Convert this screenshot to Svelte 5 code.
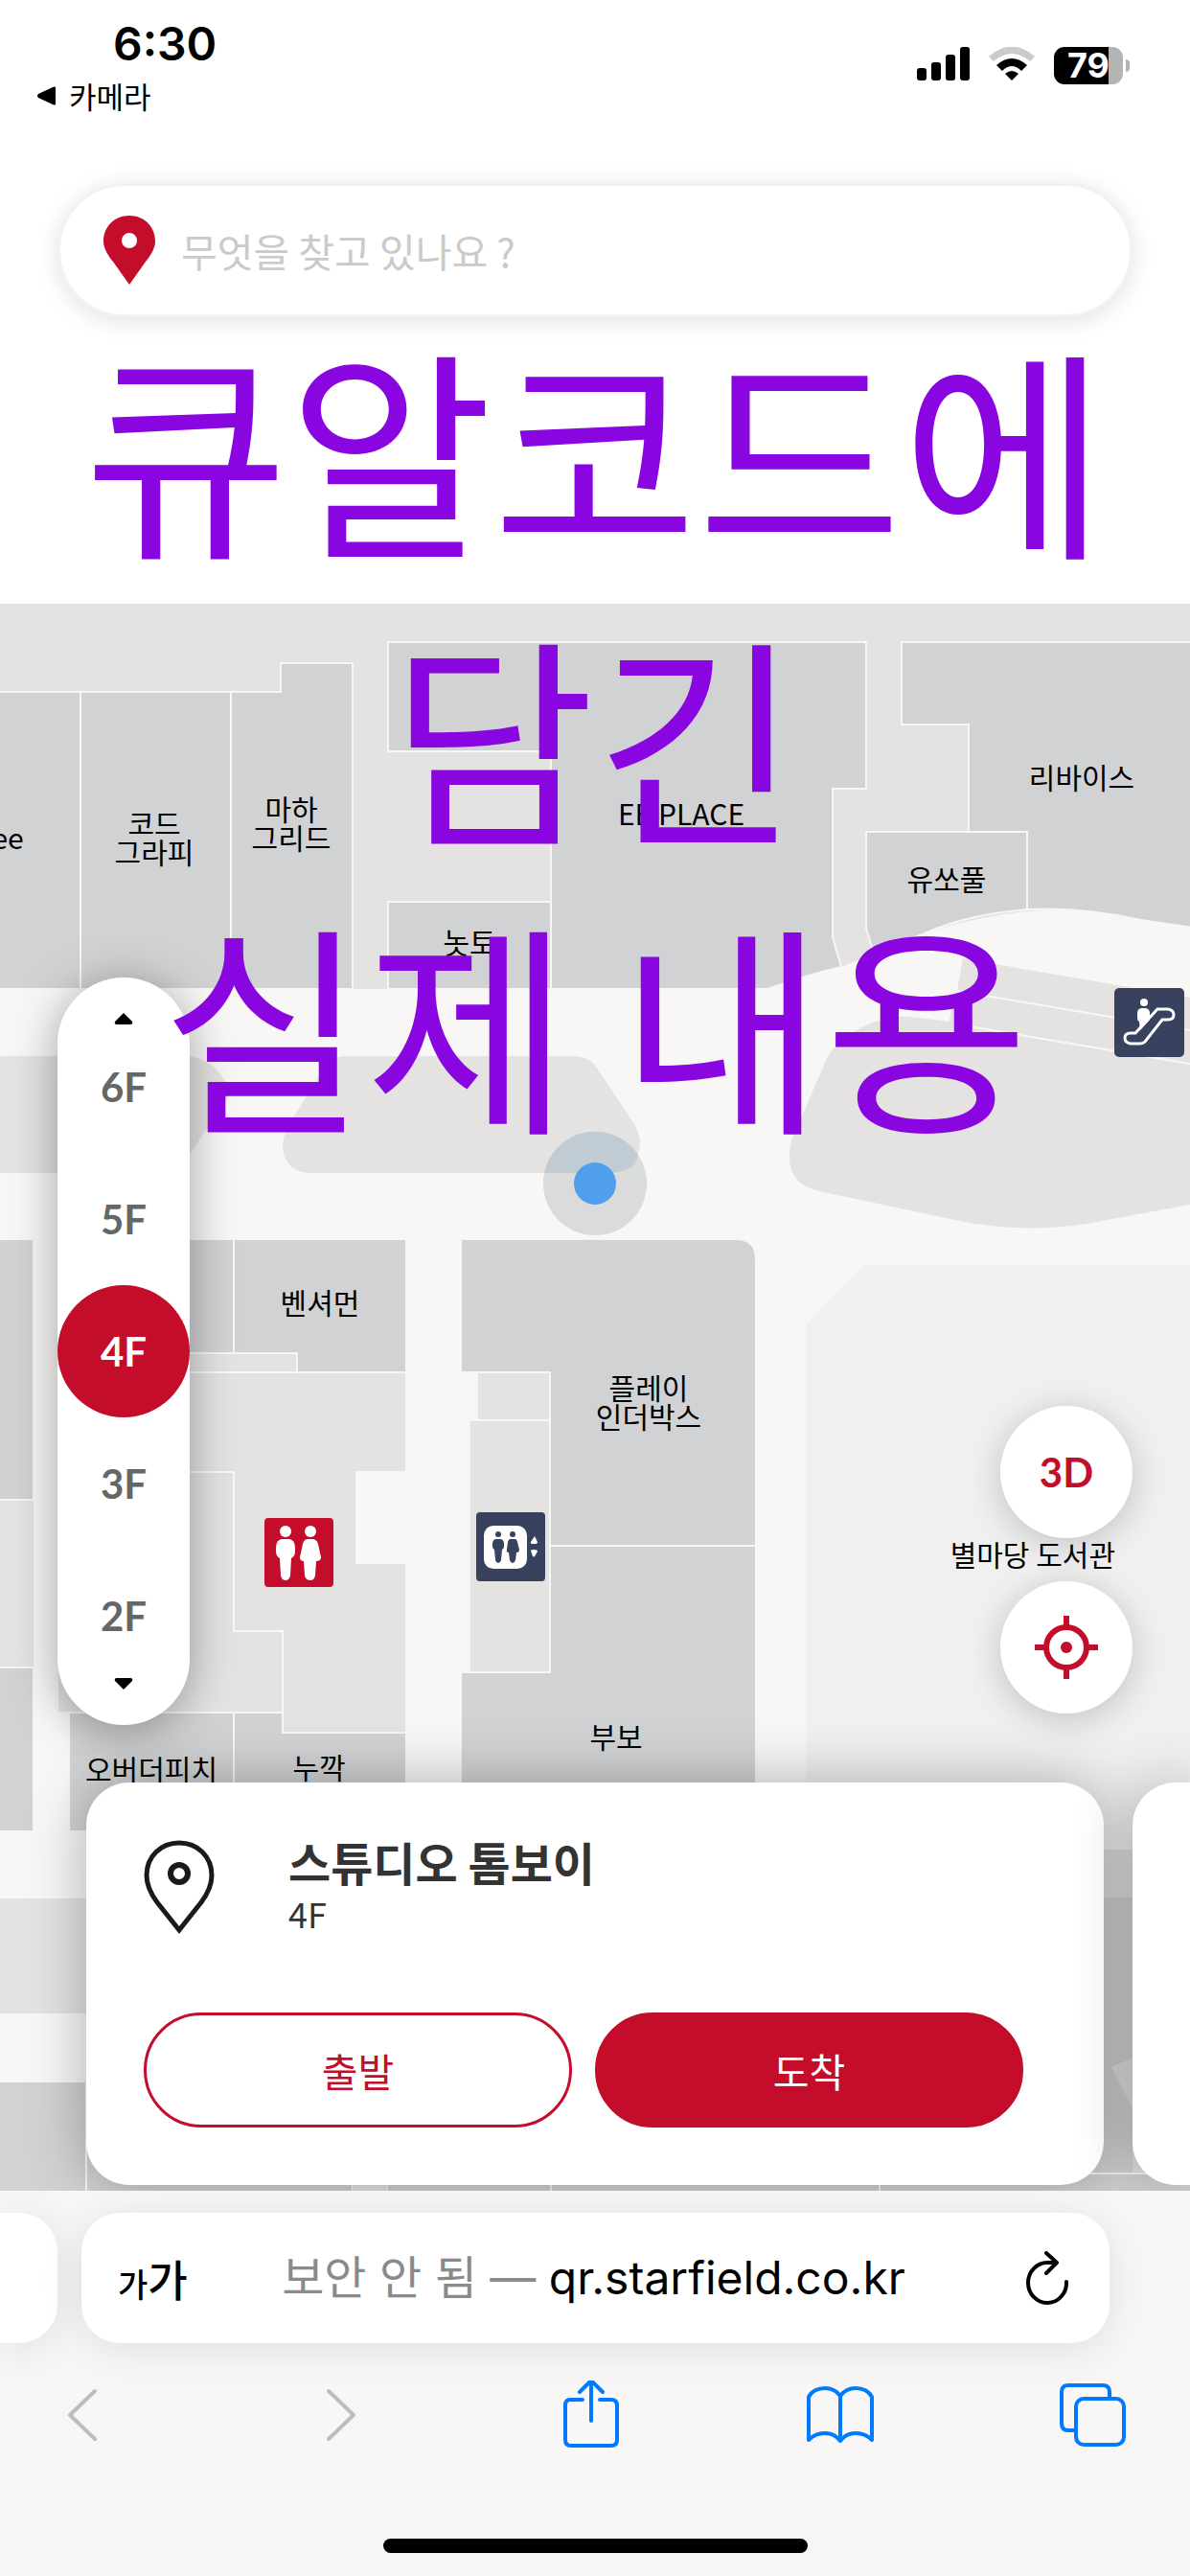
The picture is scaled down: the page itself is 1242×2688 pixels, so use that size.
<script lang="ts">
  let floors = ["6F", "5F", "4F", "3F", "2F"];
  let floor = "4F";
  let query = "";
  let is3d = false;

  const labels = [
    { x: 161, y: 871, lines: ["코드", "그라피"] },
    { x: 304, y: 856, lines: ["마하", "그리드"] },
    { x: 8, y: 886, lines: ["ee"] },
    { x: 711, y: 861, lines: ["EE PLACE"] },
    { x: 1129, y: 823, lines: ["리바이스"] },
    { x: 988, y: 929, lines: ["유쏘풀"] },
    { x: 490, y: 995, lines: ["놋토"] },
    { x: 334, y: 1371, lines: ["벤셔먼"] },
    { x: 677, y: 1460, lines: ["플레이", "인더박스"] },
    { x: 643, y: 1824, lines: ["부보"] },
    { x: 158, y: 1858, lines: ["오버더피치"] },
    { x: 333, y: 1856, lines: ["누깍"] },
  ];

  const shops = [
    "M-4 722H84V1032H-4Z",
    "M84 722H241V1032H84Z",
    "M241 722H293V692H368V1032H241Z",
    "M405 941H575V1032H405Z",
    "M405 670H904V823H869V978L878 1009Q840 1018 801 1032H575V784H405Z",
    "M941 670H1246V968L1191 960Q1130 946 1072 949V868H1011V756H941Z",
    "M904 868H1072V949Q1010 954 965 974L912 994L904 969Z",
    "M-4 1293H35V1565H-4Z",
    "M60 1293H244V1412H60Z",
    "M244 1293H424V1432H310V1412H244Z",
    "M-4 1740H35V1911H-4Z",
    "M72 1787H244V1911H72Z",
    "M244 1787H295V1808H424V1911H244Z",
    "M481 1293H768Q789 1293 789 1314V1613H574V1432H481Z",
    "M574 1613H789V1911H481V1745H574Z",
    "M-4 2172H90V2290H-4Z",
    "M90 2172H368V2290H90Z",
    "M404 2240H575V2290H404Z",
    "M575 2240H918V2290H575Z",
    "M918 2268H1246V2290H918Z",
  ];
</script>

<div class="screen">
  <div class="status">
    <div class="left">
      <div class="time">6:30</div>
      <a class="return" href="#camera">
        <svg width="22" height="20" viewBox="0 0 22 20"><path d="M20 1V19Q19 20 17 19L2 12Q0 10 2 8L17 1Q19 0 20 1Z" /></svg>
        카메라
      </a>
    </div>
    <div class="right">
      <svg width="55" height="36" viewBox="0 0 55 36">
        <rect x="0" y="22" width="10" height="13" rx="3" />
        <rect x="15" y="16" width="10" height="19" rx="3" />
        <rect x="30" y="8" width="10" height="27" rx="3" />
        <rect x="45" y="0" width="10" height="35" rx="3" />
      </svg>
      <svg width="48" height="36" viewBox="0 0 48 36">
        <path d="M0 10Q24 -11 48 10L43 15Q24 -1 5 15Z" fill="#cbcbcc" />
        <path d="M8 19Q24 5 40 19L34 25Q24 15 14 25Z" />
        <path d="M17 28Q24 22 31 28L24 35Z" />
      </svg>
      <div class="battery"><span>79</span></div>
    </div>
  </div>

  <form class="search" on:submit|preventDefault>
    <svg width="56" height="72" viewBox="0 0 56 72">
      <path fill-rule="evenodd" d="M28 0C43 0 55 11 55 27C55 34 50 42 45 48L28 72L11 48C6 42 1 34 1 27C1 11 13 0 28 0ZM28 18A8 8 0 1 0 28 34A8 8 0 1 0 28 18Z" fill="#c30d2a" />
    </svg>
    <input type="text" aria-label="매장 검색" placeholder="무엇을 찾고 있나요 ?" bind:value={query} />
  </form>

  <h1 class="headline">큐알코드에<br />담긴<br />실제 내용</h1>

  <div class="map">
    <svg class="plan" viewBox="0 630 1242 1656">
      <rect y="630" width="1242" height="1656" fill="#f8f7f5" />

      <!-- corridors and islands -->
      <g fill="#e4e3e1">
        <path d="M0 630H1242V967L1191 960Q1090 933 965 974L878 1009Q840 1018 801 1032H0Z" />
        <path d="M0 1102H195Q222 1104 236 1130Q242 1142 234 1152L198 1204Q186 1222 166 1224H0Z" />
        <path d="M362 1102H598Q614 1102 622 1113L662 1173Q676 1197 658 1214Q648 1224 632 1224H322Q295 1221 295 1194Q296 1184 301 1175L338 1114Q346 1102 362 1102Z" />
        <path d="M1242 1108L1000 1067L950 1061Q915 1059 880 1084Q867 1094 861 1109L826 1190Q816 1235 855 1243L997 1273Q1076 1290 1155 1273L1242 1257Z" />
        <path d="M1004 999L1242 1040V1112L990 1068L998 1034Z" />
        <path d="M-4 1565H35V1740H-4Z" />
        <path d="M0 1981H1242V2101H0Z" />
      </g>
      <g class="line">
        <path d="M1242 1040L1004 999L998 1034L1242 1075M1000 1069L1242 1110" />
      </g>

      <path d="M841 1382L902 1320H1242V1930H841Z" fill="#f0f0f0" />
      <path d="M841 1930H1242V2290H841Z" fill="#e0e0df" />
      <path d="M841 1980H1246V2120L1160 2157L1182 2200V2268H841Z" fill="#d0d2d4" />

      {#each shops as d}
        <path class="shop" {d} />
      {/each}

      <!-- service rooms -->
      <path class="service" d="M60 1412H310V1432H424V1536H372V1631H424V1808H295V1787H60Z" />
      <path class="service" d="M498 1432H574V1482H498Z" />
      <path class="service" d="M490 1482H574V1745H490Z" />
      <path class="line" d="M60 1432H310M60 1536H244V1702H295V1787" />
      <path d="M368 2240H404V2290H368Z" fill="#e4e3e1" />

      <g class="labels">
        {#each labels as l}
          <text x={l.x} y={l.y}>
            {#each l.lines as line, i}
              <tspan x={l.x} dy={i ? 30 : 0}>{line}</tspan>
            {/each}
          </text>
        {/each}
      </g>

      <!-- my location -->
      <circle cx="621" cy="1235" r="54" fill="#c4c9c8" fill-opacity=".6" />
      <path d="M568 1224A54 54 0 0 1 666 1205Q664 1223 636 1224Z" fill="#b4c5d4" fill-opacity=".6" />
      <circle cx="621" cy="1235" r="22" fill="#4f9fee" />

      <!-- toilets -->
      <g transform="translate(276 1584)">
        <rect width="72" height="72" rx="4" fill="#c30d2a" />
        <g fill="#fff">
          <circle cx="22" cy="14" r="6" />
          <path d="M18 22H26Q32 23 32 31V35Q32 40 28 42L27 60Q26 65 22 65Q18 65 17 60L16 42Q12 40 12 35V31Q12 23 18 22Z" />
          <circle cx="48" cy="14" r="6" />
          <path d="M44 22H51Q55 23 56 27L59 41Q59 45 54 45L53 60Q52 65 48 65Q43 65 42 60L41 45Q37 45 37 41L40 27Q41 23 44 22Z" />
        </g>
      </g>

      <!-- elevator -->
      <g transform="translate(497 1578)">
        <rect width="72" height="72" rx="4" fill="#38425f" />
        <rect x="8" y="14" width="45" height="45" rx="10" fill="#fff" />
        <g fill="#38425f">
          <circle cx="23" cy="23" r="3" />
          <path d="M20 28H26Q29 29 29 33V36Q29 38 27 39L26 50Q25 53 23 53Q21 53 20 50L19 39Q17 38 17 36V33Q17 29 20 28Z" />
          <circle cx="38" cy="23" r="3" />
          <path d="M35 28H41Q43 29 43 31L45 39Q45 42 42 42L41 50Q40 53 38 53Q36 53 35 50L34 42Q31 42 32 39L33 31Q34 28 35 28Z" />
        </g>
        <path d="M61 25L64 31Q64 33 61 33H59Q56 33 57 31ZM57 40Q57 39 60 39Q64 39 64 41L61 46Q60 47 59 46Z" fill="#fff" />
      </g>

      <!-- escalator -->
      <g transform="translate(1163 1031)">
        <rect width="73" height="72" rx="5" fill="#38425f" />
        <circle cx="31" cy="15" r="4" fill="#fff" />
        <path d="M28 21H33Q37 22 37 26V33L27 44L26 35Q24 34 24 31V26Q24 22 28 21Z" fill="#fff" />
        <path d="M45 22H56Q62 23 62 28Q62 33 56 33H50L32 56Q30 58 27 58H17Q11 57 11 52Q11 47 17 47H22Z" fill="none" stroke="#fff" stroke-width="3" />
      </g>
    </svg>

    <div class="floors">
      <button class="arrow" aria-label="위층">
        <svg width="20" height="12" viewBox="0 0 20 12"><path d="M10 0L19 9Q20 12 17 12H3Q0 12 1 9Z" /></svg>
      </button>
      {#each floors as f}
        <button class="floor" class:active={f === floor} on:click={() => (floor = f)}>{f}</button>
      {/each}
      <button class="arrow down" aria-label="아래층">
        <svg width="20" height="12" viewBox="0 0 20 12"><path d="M10 12L19 3Q20 0 17 0H3Q0 0 1 3Z" /></svg>
      </button>
    </div>

    <div class="tools">
      <button on:click={() => (is3d = !is3d)}>3D</button>
      <span class="place">별마당 도서관</span>
      <button aria-label="현재 위치">
        <svg width="66" height="66" viewBox="0 0 66 66" fill="none" stroke="#c30d2a" stroke-width="6">
          <circle cx="33" cy="33" r="21" />
          <path d="M33 0V10M33 56V66M0 33H10M56 33H66" />
          <circle cx="33" cy="33" r="6" fill="#c30d2a" stroke="none" />
        </svg>
      </button>
    </div>

    <div class="cards">
      <div class="card">
        <div class="shop-info">
          <svg width="74" height="98" viewBox="0 0 74 98" fill="none" stroke="#1a1a1c">
            <path d="M37 3C56 3 71 17 71 37C71 48 66 57 60 65L37 94L14 65C8 57 3 48 3 37C3 17 18 3 37 3Z" stroke-width="5" />
            <circle cx="37" cy="35" r="9" stroke-width="6" />
          </svg>
          <div>
            <h2>스튜디오 톰보이</h2>
            <p>4F</p>
          </div>
        </div>
        <div class="actions">
          <button class="start">출발</button>
          <button class="arrive">도착</button>
        </div>
      </div>
      <div class="card next"></div>
    </div>
  </div>

  <div class="browser">
    <div class="tabs">
      <div class="tab prev"></div>
      <div class="tab">
        <button class="text-size" aria-label="글자 크기"><small>가</small>가</button>
        <div class="url"><span>보안 안 됨 —</span> qr.starfield.co.kr</div>
        <button class="reload" aria-label="새로 고침">
          <svg width="46" height="56" viewBox="0 0 46 56" fill="none" stroke="#000" stroke-width="4" stroke-linecap="round">
            <path d="M43 32A20 21 0 1 1 23 12H32" />
            <path d="M22 2L33 12L22 23" stroke-linejoin="round" />
          </svg>
        </button>
      </div>
    </div>

    <nav>
      <button class="off" aria-label="뒤로">
        <svg width="72" height="72" viewBox="0 0 72 72"><path d="M48 11L22 36L48 61" /></svg>
      </button>
      <button class="off" aria-label="앞으로">
        <svg width="72" height="72" viewBox="0 0 72 72"><path d="M29 11L55 36L29 61" /></svg>
      </button>
      <button aria-label="공유">
        <svg width="72" height="72" viewBox="0 0 72 72">
          <path d="M30 20H17Q12 20 12 26V62Q12 68 18 68H60Q66 68 66 62V26Q66 20 60 20H48M39 42V1M27 12L39 0L51 12" />
        </svg>
      </button>
      <button aria-label="책갈피">
        <svg width="72" height="72" viewBox="0 0 72 72">
          <path d="M36 16Q30 8 20 8Q8 8 3 17V62Q10 55 20 55Q30 55 36 63Q42 55 52 55Q62 55 69 62V17Q64 8 52 8Q42 8 36 16ZM36 16V62" />
        </svg>
      </button>
      <button aria-label="탭">
        <svg width="72" height="72" viewBox="0 0 72 72">
          <path d="M54 18V12Q54 5 47 5H11Q4 5 4 12V45Q4 52 11 52H18" />
          <rect x="19" y="19" width="50" height="48" rx="8" />
        </svg>
      </button>
    </nav>
    <div class="home"></div>
  </div>
</div>

<style>
  :global(body) {
    margin: 0;
    background: #fff;
  }

  .screen {
    position: relative;
    min-height: 100vh;
    display: flex;
    flex-direction: column;
    overflow: hidden;
    font-family: "Noto Sans CJK KR", sans-serif;
    color: #000;
  }

  button {
    padding: 0;
    border: none;
    background: none;
    font: inherit;
    color: inherit;
    display: flex;
    align-items: center;
    justify-content: center;
  }

  svg {
    display: block;
    flex: none;
  }

  .status {
    display: flex;
    justify-content: space-between;
    padding: 18px 70px 0 38px;
    height: 110px;
  }

  .time {
    padding-left: 80px;
    font: 600 48px/56px Inter, sans-serif;
  }

  .return {
    display: flex;
    align-items: center;
    gap: 12px;
    font-size: 31px;
    line-height: 52px;
    color: #000;
    text-decoration: none;
  }

  .right {
    display: flex;
    gap: 20px;
    padding-top: 31px;
    align-items: flex-start;
  }

  .battery {
    position: relative;
    width: 72px;
    height: 39px;
    border-radius: 11px;
    background: linear-gradient(90deg, #000 57px, #b4b4b5 57px);
    color: #fff;
    font: 700 36px/39px Inter, sans-serif;
    text-align: center;
  }

  .battery::after {
    content: "";
    position: absolute;
    left: 75px;
    top: 13px;
    width: 4px;
    height: 13px;
    border-radius: 0 4px 4px 0;
    background: #b4b4b5;
  }

  .search {
    display: flex;
    align-items: center;
    gap: 26px;
    height: 134px;
    margin: 63px 60px 299px;
    padding: 0 45px 0 44px;
    border: 3px solid #f2f2f2;
    border-radius: 70px;
    background: #fff;
    box-shadow: 0 4px 24px rgba(0, 0, 0, 0.12);
  }

  .search input {
    flex: 1;
    min-width: 0;
    padding: 0;
    border: none;
    outline: none;
    background: none;
    font: 400 41px/60px "Noto Sans CJK KR", sans-serif;
  }

  .search input::placeholder {
    color: #cacaca;
  }

  .headline {
    position: absolute;
    z-index: 2;
    top: 314px;
    left: 0;
    right: 0;
    margin: 0;
    text-align: center;
    font-size: 232px;
    font-weight: 400;
    line-height: 300px;
    color: #8a06e0;
    pointer-events: none;
  }

  .map {
    position: relative;
    overflow: hidden;
  }

  .plan {
    width: 100%;
    height: auto;
  }

  .shop {
    fill: #d0d2d4;
    stroke: #f6f6f4;
    stroke-width: 2;
  }

  .service {
    fill: #e4e3e1;
    stroke: #f6f6f4;
    stroke-width: 2;
  }

  .line {
    fill: none;
    stroke: #f8f8f7;
    stroke-width: 2;
  }

  .labels {
    font-size: 30px;
    text-anchor: middle;
  }

  .floors {
    position: absolute;
    top: 390px;
    left: 60px;
    width: 138px;
    height: 780px;
    border-radius: 69px;
    background: #fff;
    box-shadow: 0 6px 48px rgba(0, 0, 0, 0.35);
    display: flex;
    flex-direction: column;
  }

  .arrow {
    flex: 1;
    align-items: flex-end;
    margin-bottom: -4px;
  }

  .arrow.down {
    align-items: flex-start;
    margin: -4px 0 0;
  }

  .floor {
    height: 138px;
    border-radius: 50%;
    font: 700 42px Lato, sans-serif;
    color: #666;
  }

  .floor.active {
    background: #c30d2a;
    color: #fff;
  }

  .tools {
    position: absolute;
    top: 837px;
    right: 60px;
    display: flex;
    flex-direction: column;
    align-items: flex-end;
  }

  .tools button {
    width: 138px;
    height: 138px;
    border-radius: 50%;
    background: #fff;
    box-shadow: 0 6px 36px rgba(0, 0, 0, 0.2);
    font: 700 42px Lato, sans-serif;
    color: #c30d2a;
  }

  .place {
    position: relative;
    z-index: 1;
    padding: 0 18px 12px 0;
    font-size: 30px;
    line-height: 33px;
  }

  .cards {
    position: absolute;
    left: 90px;
    right: 0;
    bottom: 6px;
    display: flex;
    gap: 30px;
  }

  .card {
    flex: 1;
    padding: 60px 84px 60px 60px;
    border-radius: 45px;
    background: #fff;
    box-shadow: 0 0 60px rgba(0, 0, 0, 0.3);
  }

  .card.next {
    flex: none;
    width: 60px;
    padding: 0;
    border-radius: 45px 0 0 45px;
  }

  .shop-info {
    display: flex;
    gap: 77px;
    height: 180px;
  }

  h2 {
    margin: 0;
    font-size: 48px;
    line-height: 44px;
    color: #333;
  }

  p {
    margin: 8px 0 0;
    font-size: 36px;
    line-height: 48px;
    color: #333;
  }

  .actions {
    display: flex;
    gap: 24px;
  }

  .actions button {
    flex: 1;
    height: 120px;
    border: 3px solid #c30d2a;
    border-radius: 60px;
    font-size: 41px;
    color: #c30d2a;
  }

  .actions .arrive {
    background: #c30d2a;
    color: #fff;
  }

  .browser {
    flex: 1;
    background: #f8f7f6;
    display: flex;
    flex-direction: column;
  }

  .tabs {
    display: flex;
    gap: 25px;
    padding: 23px 84px 0 0;
  }

  .tab {
    flex: 1;
    display: grid;
    grid-template-columns: 1fr auto 1fr;
    align-items: center;
    box-sizing: border-box;
    height: 136px;
    padding: 0 42px 0 38px;
    border-radius: 40px;
    background: #fff;
    box-shadow: 0 6px 45px rgba(0, 0, 0, 0.1);
  }

  .tab.prev {
    flex: none;
    width: 60px;
    padding: 0;
    border-radius: 0 40px 40px 0;
  }

  .text-size {
    justify-self: start;
    align-items: baseline;
    font-size: 45px;
    font-weight: 500;
  }

  .text-size small {
    font-size: 34px;
  }

  .reload {
    justify-self: end;
  }

  .url {
    font: 400 48px/72px Inter, "Noto Sans CJK KR", sans-serif;
    white-space: nowrap;
  }

  .url span {
    color: #8a8a8c;
  }

  nav {
    display: flex;
    justify-content: space-between;
    padding: 39px 66px 0 51px;
  }

  nav svg {
    fill: none;
    stroke: #007aff;
    stroke-width: 4;
    stroke-linecap: round;
    stroke-linejoin: round;
  }

  nav .off svg {
    stroke: #bdbdbe;
  }

  .home {
    width: 443px;
    height: 15px;
    margin: auto auto 24px;
    border-radius: 8px;
    background: #000;
  }
</style>
